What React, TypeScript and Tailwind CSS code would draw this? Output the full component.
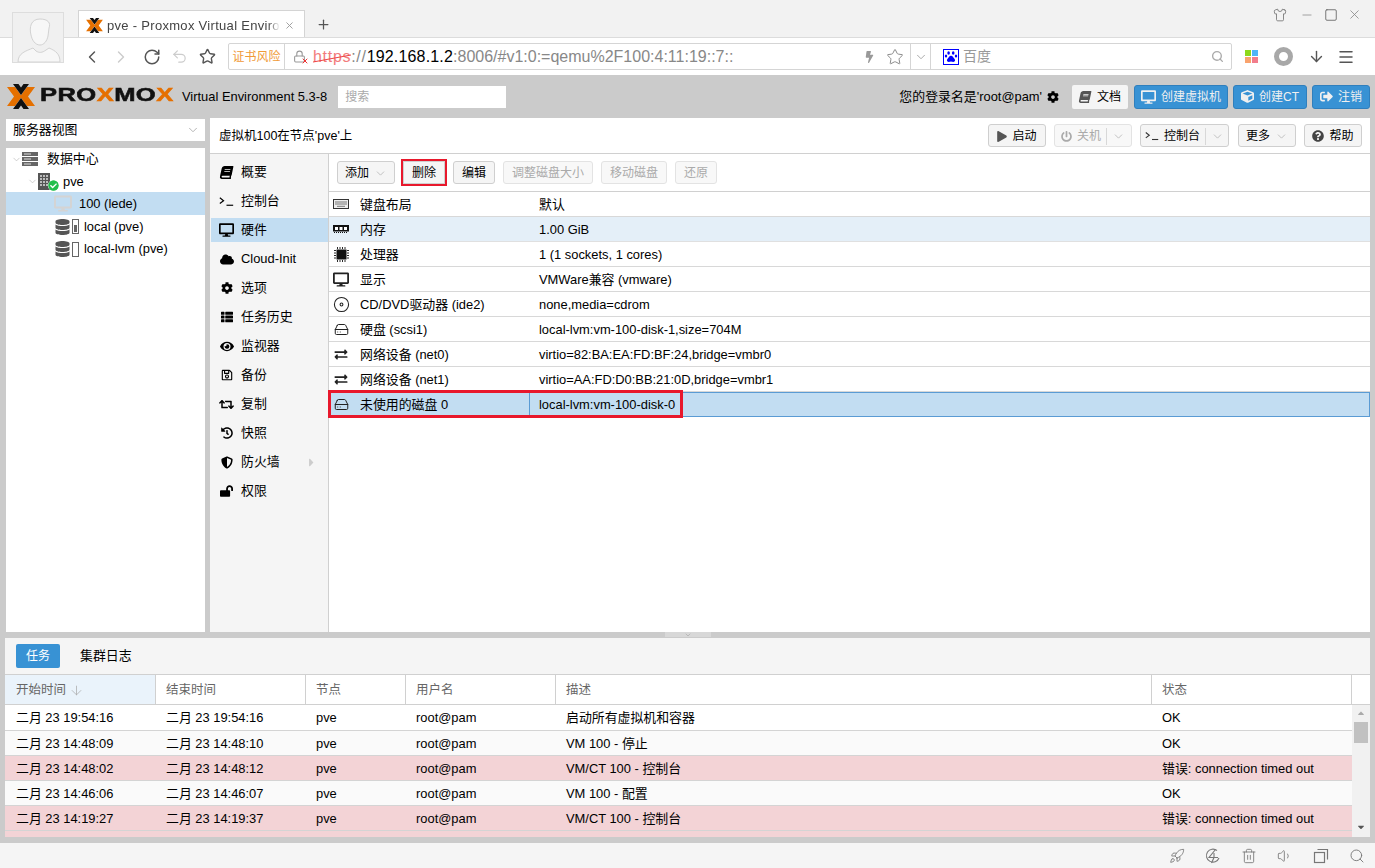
import { ReactNode } from 'react'
import {
  FaBook, FaCloud, FaCog, FaThList, FaEye, FaRegSave, FaRetweet, FaHistory, FaShieldAlt, FaLockOpen,
  FaDesktop, FaDatabase, FaCube, FaSignOutAlt, FaQuestionCircle, FaPlay, FaPowerOff,
  FaExchangeAlt, FaCheckCircle, FaCaretRight, FaCaretUp, FaCaretDown, FaBolt,
} from 'react-icons/fa'
import {
  ChevronDown, ChevronLeft, ChevronRight, RotateCw, Undo2, Star, Lock, Search, ArrowDown, Menu, Plus, X,
  Minus, Square, Shirt, HardDrive, Disc, Rocket, Trash2, Volume1, ArrowDown as SortDown,
} from 'lucide-react'

const PxLogo = ({ className }: { className?: string }) => (
  <svg viewBox="0 0 28 25" className={className}>
    <polygon points="0,3 8,3 15,12.500 8,22 0,22 7,12.500" fill="#e57000" />
    <polygon points="28,3 20,3 13,12.500 20,22 28,22 21,12.500" fill="#e57000" />
    <polygon points="6,0 11.500,0 14,3.500 16.500,0 22,0 14,11" fill="#111" />
    <polygon points="6,25 11.500,25 14,21.500 16.500,25 22,25 14,14" fill="#111" />
  </svg>
)

const Term = ({ className }: { className?: string }) => (
  <svg viewBox="0 0 18 12" className={className} fill="none" stroke="currentColor" strokeWidth="1.4">
    <path d="M1 1.500 5.500 5 1 8.500" />
    <path d="M9 10.500h8" />
  </svg>
)

const ServerIcon = () => (
  <svg viewBox="0 0 16 14" className="block h-[14px] w-[16px]">
    <rect x="0" y="0" width="16" height="4" fill="#666" />
    <rect x="0" y="5" width="16" height="4" fill="#666" />
    <rect x="0" y="10" width="16" height="4" fill="#666" />
    <path d="M2 2h7M2 7h7M2 12h7" stroke="#ddd" strokeWidth="1" />
  </svg>
)

const NodeIcon = () => (
  <span className="relative block h-[17px] w-[20px]">
    <svg viewBox="0 0 12 17" className="absolute left-0 top-0 h-[17px] w-[12px]">
      <rect width="12" height="17" fill="#555" />
      <path d="M2 3h2M5 3h2M8 3h2M2 6h2M5 6h2M8 6h2M2 9h2M5 9h2M8 9h2M2 12h2M5 12h2M8 12h2" stroke="#ddd" strokeWidth="1.400" />
    </svg>
    <FaCheckCircle className="absolute bottom-[-1px] right-[-1px] h-[11px] w-[11px] rounded-full bg-white text-[#21bf4b]" />
  </span>
)

const StorageIcon = ({ fill }: { fill: boolean }) => (
  <span className="flex items-center gap-[2px]">
    <FaDatabase className="h-[16px] w-[15px] text-[#555]" />
    <span className="flex h-[15px] w-[7px] items-end border border-[#666] bg-white p-px">
      {fill && <span className="h-[7px] w-full bg-[#666]" />}
    </span>
  </span>
)

const KeyboardIcon = () => (
  <svg viewBox="0 0 16 10" className="h-[10px] w-[16px]">
    <rect x=".5" y=".5" width="15" height="9" fill="#eee" stroke="#333" />
    <path d="M2 3h12M2 5h12M4 7.300h8" stroke="#777" strokeWidth="1" />
  </svg>
)

const MemoryIcon = () => (
  <svg viewBox="0 0 16 8" className="h-[8px] w-[16px]">
    <rect width="16" height="6.500" fill="#111" />
    <rect x="2" y="2" width="3" height="3" fill="#fff" />
    <rect x="6.500" y="2" width="3" height="3" fill="#fff" />
    <rect x="11" y="2" width="3" height="3" fill="#fff" />
    <path d="M1 7.500h14" stroke="#111" strokeDasharray="1 1" />
  </svg>
)

const ChipIcon = () => (
  <svg viewBox="0 0 15 15" className="h-[15px] w-[15px]">
    <path d="M0 3.500h15M0 6h15M0 8.500h15M0 11h15M3.500 0v15M6 0v15M8.500 0v15M11 0v15" stroke="#111" strokeWidth=".9" />
    <rect x="2" y="2" width="11" height="11" fill="#fff" />
    <rect x="2.500" y="2.500" width="10" height="10" fill="#111" />
  </svg>
)

const BaiduIcon = () => (
  <svg viewBox="0 0 16 16" className="block h-4 w-4">
    <rect x=".5" y=".5" width="15" height="15" fill="#fff" stroke="#00f" />
    <g fill="#00f">
      <ellipse cx="5.600" cy="4" rx="1.300" ry="1.700" />
      <ellipse cx="10.200" cy="4" rx="1.300" ry="1.700" />
      <ellipse cx="3" cy="7" rx="1.200" ry="1.500" />
      <ellipse cx="13" cy="7" rx="1.200" ry="1.500" />
      <path d="M8 6.800c2 0 2.200 2 3.400 3 1.200 1.100.8 3-1 3.100-1 0-1.600-.4-2.400-.4s-1.400.4-2.400.4c-1.800-.1-2.200-2-1-3.100C5.800 8.800 6 6.800 8 6.800z" />
    </g>
  </svg>
)

// status bar: circle with a bolt cutting through it
const BoltCircle = () => (
  <svg viewBox="0 0 16 16" className="h-4 w-4" fill="none" stroke="currentColor" strokeWidth="1.100">
    <path d="M12 2.500A6.500 6.500 0 1 0 14 10" />
    <path d="M10.500 1.500 4 9.500h5L6.500 15M9 5v4.500h4" />
  </svg>
)

const CopyBox = () => (
  <svg viewBox="0 0 16 16" className="h-4 w-4" fill="none" stroke="currentColor" strokeWidth="1.200">
    <rect x="1.500" y="4.500" width="10" height="10" />
    <path d="M4.500 1.500h10v10" />
  </svg>
)

const TopBtn = ({ icon, label, className }: { icon: ReactNode; label: string; className: string }) => (
  <button className={`flex h-6 items-center justify-center gap-[5px] rounded-[3px] border border-[#2f7fbd] bg-[#3892d4] text-[12px] text-[#f0f0f0] ${className}`}>
    {icon}
    <span className="pt-px">{label}</span>
  </button>
)

const Btn = ({ children, className = '', disabled }: { children: ReactNode; className?: string; disabled?: boolean }) => (
  <button className={`flex h-[23px] items-center justify-center gap-[5px] rounded-[3px] border pt-px text-[12px] ${disabled ? 'border-[#e3e3e3] bg-[#f8f8f8] text-[#aaa]' : 'border-[#cfcfcf] bg-[#f5f5f5] text-[#000]'} ${className}`}>
    {children}
  </button>
)

const Drop = () => <ChevronDown className="h-[13px] w-[13px] text-[#b5b5b5]" strokeWidth={1.5} />
const Sep = () => <span className="h-[17px] w-px bg-[#d8d8d8]" />

const navItems: { icon: ReactNode; label: string; active?: boolean; more?: boolean }[] = [
  { icon: <FaBook className="h-[13px] w-[13px] -skew-x-12" />, label: '概要' },
  { icon: <Term className="h-[11px] w-[15px]" />, label: '控制台' },
  { icon: <FaDesktop className="h-[14px] w-[15px]" />, label: '硬件', active: true },
  { icon: <FaCloud className="h-[13px] w-[14px]" />, label: 'Cloud-Init' },
  { icon: <FaCog className="h-[12px] w-[12px]" />, label: '选项' },
  { icon: <FaThList className="h-[12px] w-[14px]" />, label: '任务历史' },
  { icon: <FaEye className="h-[13px] w-[14px]" />, label: '监视器' },
  { icon: <FaRegSave className="h-[12px] w-[12px]" />, label: '备份' },
  { icon: <FaRetweet className="h-[13px] w-[15px]" />, label: '复制' },
  { icon: <FaHistory className="h-[12px] w-[12px]" />, label: '快照' },
  { icon: <FaShieldAlt className="h-[13px] w-[12px]" />, label: '防火墙', more: true },
  { icon: <FaLockOpen className="h-[12px] w-[13px]" />, label: '权限' },
]

const hwRows: { icon: ReactNode; name: string; value: string; tint?: boolean; sel?: boolean }[] = [
  { icon: <KeyboardIcon />, name: '键盘布局', value: '默认' },
  { icon: <MemoryIcon />, name: '内存', value: '1.00 GiB', tint: true },
  { icon: <ChipIcon />, name: '处理器', value: '1 (1 sockets, 1 cores)' },
  { icon: <FaDesktop className="h-[15px] w-[16px]" />, name: '显示', value: 'VMWare兼容 (vmware)' },
  { icon: <Disc className="h-[17px] w-[17px]" strokeWidth={1.5} />, name: 'CD/DVD驱动器 (ide2)', value: 'none,media=cdrom' },
  { icon: <HardDrive className="h-[15px] w-[15px]" strokeWidth={1.6} />, name: '硬盘 (scsi1)', value: 'local-lvm:vm-100-disk-1,size=704M' },
  { icon: <FaExchangeAlt className="h-[13px] w-[16px]" />, name: '网络设备 (net0)', value: 'virtio=82:BA:EA:FD:BF:24,bridge=vmbr0' },
  { icon: <FaExchangeAlt className="h-[13px] w-[16px]" />, name: '网络设备 (net1)', value: 'virtio=AA:FD:D0:BB:21:0D,bridge=vmbr1' },
  { icon: <HardDrive className="h-[15px] w-[15px]" strokeWidth={1.6} />, name: '未使用的磁盘 0', value: 'local-lvm:vm-100-disk-0', sel: true },
]

const tasks = [
  ['二月 23 19:54:16', '二月 23 19:54:16', '启动所有虚拟机和容器', 'OK', false],
  ['二月 23 14:48:09', '二月 23 14:48:10', 'VM 100 - 停止', 'OK', false],
  ['二月 23 14:48:02', '二月 23 14:48:12', 'VM/CT 100 - 控制台', '错误: connection timed out', true],
  ['二月 23 14:46:06', '二月 23 14:46:07', 'VM 100 - 配置', 'OK', false],
  ['二月 23 14:19:27', '二月 23 14:19:37', 'VM/CT 100 - 控制台', '错误: connection timed out', true],
] as const

const taskCols = 'grid grid-cols-[151px_150px_100px_150px_596px_200px]'

export default function App() {
  return (
    <div className="flex h-screen w-full flex-col overflow-hidden bg-[#cbcbcb] font-['Liberation_Sans','Noto_Sans_CJK_SC',sans-serif] text-[12.9px] text-black">
      {/* browser tab strip */}
      <div className="relative flex h-[38px] shrink-0 items-end border-b border-[#dcdcdc] bg-[#f2f2f2] pl-[78px]">
        <div className="flex h-[27px] w-[227px] items-center gap-[4px] border border-b-0 border-[#d4d4d4] bg-white pl-[7px] pr-[9px] pt-[3px] text-[13px] text-[#444]">
          <PxLogo className="h-[15px] w-[17px] shrink-0" />
          <span className="min-w-0 flex-1 whitespace-nowrap tracking-[0.3px] [mask-image:linear-gradient(to_left,transparent,black_12px)]">pve - Proxmox Virtual Enviror</span>
          <X className="h-[11px] w-[11px] shrink-0 text-[#999]" />
        </div>
        <Plus className="mb-[5px] ml-[11px] h-[15px] w-[15px] text-[#555]" strokeWidth={2} />
        <div className="ml-auto mb-[15px] flex items-center pr-[13px] text-[#666]">
          <Shirt className="h-[14px] w-[14px]" strokeWidth={1.3} />
          <Minus className="ml-[13px] h-[14px] w-[14px] text-[#888]" strokeWidth={1.3} />
          <Square className="ml-[10px] h-[14px] w-[14px]" strokeWidth={1.5} />
          <X className="ml-[9px] h-[15px] w-[15px] text-[#888]" strokeWidth={1.3} />
        </div>
        {/* avatar overlaps tab strip and toolbar */}
        <div className="absolute left-[12px] top-[12px] z-10 h-[51px] w-[52px] border border-[#ddd] bg-[#f0f0f0]">
          <svg viewBox="0 0 50 49" className="h-full w-full" fill="#f7f7f7" stroke="#d2d2d2">
            <path d="M18 22c-2-8 0-16 9-16 8 0 11 4 9 9l-1 8c-1 5-4 9-8 9-5 0-8-5-9-10z" />
            <path d="M5 49c0-9 8-11 15-14l3 3c3 2 6 2 10-1l3-2c7 3 11 6 11 14z" />
          </svg>
        </div>
      </div>

      {/* browser toolbar */}
      <div className="flex h-[37px] shrink-0 items-center bg-white pl-[82px]">
        <ChevronLeft className="h-[20px] w-[20px] text-[#555]" strokeWidth={1.7} />
        <ChevronRight className="ml-[9px] h-[20px] w-[20px] text-[#ccc]" strokeWidth={1.7} />
        <RotateCw className="ml-[12px] h-[18px] w-[18px] text-[#555]" strokeWidth={2} />
        <Undo2 className="ml-[10px] h-[17px] w-[17px] text-[#ccc]" strokeWidth={1.7} />
        <Star className="ml-[11px] h-[17px] w-[17px] text-[#555]" strokeWidth={2} />
        <div className="ml-[12px] flex h-[27px] w-[1004px] items-center rounded-[2px] border border-[#d5d5d5]">
          <span className="flex h-full w-[56px] shrink-0 items-center justify-center border-r border-[#d5d5d5] text-[12px] text-[#f09a37]">证书风险</span>
          <span className="relative ml-[8px] mr-[7px] shrink-0">
            <Lock className="h-[13px] w-[13px] text-[#999]" strokeWidth={2} />
            <X className="absolute bottom-[-2px] right-[-3px] h-[8px] w-[8px] text-[#e33]" strokeWidth={3} />
          </span>
          <span className="min-w-0 flex-1 whitespace-nowrap text-[16px] text-[#888]">
            <span className="tracking-[0.7px]">
              <span className="relative text-[#f27c7c]">
                https
                <svg viewBox="0 0 38 10" className="absolute left-0 top-[6px] h-[10px] w-[38px]">
                  <path d="M0 8 38 1" stroke="#e44" strokeWidth="1.200" />
                </svg>
              </span>
              ://
            </span>
            <span className="tracking-[0.17px] text-black">192.168.1.2</span>:8006/#v1:0:=qemu%2F100:4:11:19::7::
          </span>
          <FaBolt className="h-[12px] w-[9px] shrink-0 text-[#999]" />
          <Star className="ml-[12px] h-[18px] w-[18px] shrink-0 text-[#888]" strokeWidth={1.3} />
          <span className="ml-[6px] flex h-full w-[21px] shrink-0 items-center justify-center border-x border-[#d5d5d5]">
            <ChevronDown className="h-[14px] w-[14px] text-[#aaa]" strokeWidth={1.7} />
          </span>
          <span className="ml-[12px] shrink-0"><BaiduIcon /></span>
          <span className="ml-[4px] flex-none text-[14px] text-[#999]">百度</span>
          <span className="w-[220px] shrink-0" />
          <Search className="mr-[7px] h-[13px] w-[13px] shrink-0 text-[#aaa]" strokeWidth={2.5} />
        </div>
        <span className="ml-[13px] grid h-[13px] w-[13px] grid-cols-2 gap-px">
          <i className="bg-[#8ed81a]" />
          <i className="bg-[#4fb5f7]" />
          <i className="bg-[#f9a36d]" />
          <i className="bg-[#f27d8c]" />
        </span>
        <span className="ml-[16px] h-[19px] w-[19px] rounded-full border-[5px] border-[#a8a8a8]" />
        <ArrowDown className="ml-[15px] h-[17px] w-[17px] text-[#555]" strokeWidth={2} />
        <Menu className="ml-[12px] h-[18px] w-[18px] text-[#555]" strokeWidth={2} />
      </div>

      {/* proxmox header */}
      <div className="flex h-[43px] shrink-0 items-center pl-[7px] pr-[5px]">
        <PxLogo className="h-[25px] w-[28px]" />
        <span className="ml-[5px] w-[134px] shrink-0 whitespace-nowrap">
          <span className="inline-block origin-left scale-x-[1.42] text-[18px] font-bold leading-none tracking-[0.3px] text-[#111] [-webkit-text-stroke:0.5px]">
            PRO<span className="text-[#e57000]">X</span>MO<span className="text-[#e57000]">X</span>
          </span>
        </span>
        <span className="ml-[8px] whitespace-nowrap pt-px">Virtual Environment 5.3-8</span>
        <div className="ml-[11px] flex h-[22px] w-[168px] items-center bg-white px-[7px] pt-px text-[12px] text-[#aaa]">搜索</div>
        <span className="ml-auto whitespace-nowrap pt-px">您的登录名是'root@pam'</span>
        <FaCog className="ml-[5px] h-[12px] w-[12px]" />
        <button className="ml-[13px] flex h-6 w-[56px] items-center justify-center gap-[6px] rounded-[2px] bg-[#f5f5f5] pt-px text-[12px]">
          <FaBook className="h-[12px] w-[12px] -skew-x-12 text-[#555]" />
          文档
        </button>
        <TopBtn className="ml-[6px] w-[94px]" icon={<FaDesktop className="h-[14px] w-[15px]" />} label="创建虚拟机" />
        <TopBtn className="ml-[5px] w-[74px]" icon={<FaCube className="h-[13px] w-[13px]" />} label="创建CT" />
        <TopBtn className="ml-[5px] w-[58px]" icon={<FaSignOutAlt className="h-[13px] w-[13px]" />} label="注销" />
      </div>

      {/* workspace */}
      <div className="flex h-[514px] shrink-0 gap-[5px] pl-[6px] pr-[5px]">
        <div className="flex w-[199px] flex-col gap-[7px] pt-px">
          <div className="flex h-[22px] items-center justify-between bg-white pl-[7px] pr-[5px]">
            服务器视图
            <ChevronDown className="h-[14px] w-[14px] text-[#aaa]" strokeWidth={1.5} />
          </div>
          <div className="flex-1 bg-white">
            <div className="flex h-[22px] items-center pl-[5px]">
              <ChevronDown className="h-[11px] w-[11px] text-[#bbb]" strokeWidth={1.5} />
              <span><ServerIcon /></span>
              <span className="ml-[9px]">数据中心</span>
            </div>
            <div className="flex h-[22px] items-center pl-[21px]">
              <ChevronDown className="h-[11px] w-[11px] text-[#bbb]" strokeWidth={1.5} />
              <span><NodeIcon /></span>
              <span className="ml-[5px] pt-px">pve</span>
            </div>
            <div className="flex h-[23px] items-center bg-[#c2ddf2] pl-[48px]">
              <FaDesktop className="h-[17px] w-[18px] text-[#d4d4d4]" />
              <span className="ml-[7px]">100 (lede)</span>
            </div>
            <div className="flex h-[23px] items-center pl-[49px]">
              <StorageIcon fill />
              <span className="ml-[5px]">local (pve)</span>
            </div>
            <div className="flex h-[22px] items-center pl-[49px]">
              <StorageIcon fill={false} />
              <span className="ml-[5px]">local-lvm (pve)</span>
            </div>
          </div>
        </div>

        <div className="flex flex-1 flex-col bg-white">
          <div className="flex h-[36px] shrink-0 items-center border-b border-[#d0d0d0] pl-[9px] pr-[8px]">
            <span className="pt-[2px] text-[12.5px]">虚拟机100在节点'pve'上</span>
            <div className="ml-auto flex items-center gap-[8px]">
              <Btn className="w-[58px]"><FaPlay className="h-[11px] w-[10px] text-[#555]" />启动</Btn>
              <Btn disabled className="w-[78px]"><FaPowerOff className="h-[11px] w-[11px]" />关机<Sep /><Drop /></Btn>
              <Btn className="w-[89px]"><Term className="h-[10px] w-[14px] text-[#333]" />控制台<Sep /><Drop /></Btn>
              <Btn className="ml-[1px] w-[58px]">更多<Drop /></Btn>
              <Btn className="w-[58px]"><FaQuestionCircle className="h-[12px] w-[12px] text-[#444]" />帮助</Btn>
            </div>
          </div>

          <div className="flex min-h-0 flex-1">
            <div className="flex w-[119px] shrink-0 flex-col gap-[5px] border-r border-[#d0d0d0] bg-[#f5f5f5] pl-px pt-[6px]">
              {navItems.map((item) => (
                <div key={item.label} className={`flex h-6 shrink-0 items-center ${item.active ? 'bg-[#c2ddf2]' : ''}`}>
                  <span className="flex w-[30px] shrink-0 justify-center pl-[1px]">{item.icon}</span>
                  <span>{item.label}</span>
                  {item.more && <FaCaretRight className="ml-[25px] h-[13px] w-[13px] text-[#ccc]" />}
                </div>
              ))}
            </div>

            <div className="flex min-w-0 flex-1 flex-col">
              <div className="flex h-[38px] shrink-0 items-center gap-[8px] border-b border-[#d0d0d0] pl-[8px]">
                <Btn className="w-[58px]">添加<Drop /></Btn>
                <Btn className="w-[42px] rounded-none! outline-2 outline-[#e8182c]">删除</Btn>
                <Btn className="w-[42px]">编辑</Btn>
                <Btn disabled className="w-[90px]">调整磁盘大小</Btn>
                <Btn disabled className="w-[66px]">移动磁盘</Btn>
                <Btn disabled className="w-[42px]">还原</Btn>
              </div>
              {hwRows.map((row) => (
                <div
                  key={row.name}
                  className={`relative grid h-[25px] shrink-0 grid-cols-[200px_1fr] border-b ${row.sel ? 'border-[#5a9bd4] bg-[#c2ddf2]' : row.tint ? 'border-[#e0e0e0] bg-[#e4eff8]' : 'border-[#d8d8d8]'}`}
                >
                  <div className="flex items-center pl-[2px]">
                    <span className="flex w-[20px] justify-center text-[#222]">{row.icon}</span>
                    <span className="ml-[9px] whitespace-nowrap pt-px">{row.name}</span>
                  </div>
                  <div className={`flex items-center pt-px ${row.sel ? 'border-x border-t border-[#5a9bd4] pl-[9px]' : 'pl-[10px]'}`}>
                    {row.value}
                  </div>
                  {row.sel && <div className="absolute -left-px -top-[2px] bottom-[-2px] w-[355px] border-[3px] border-[#e8182c]" />}
                </div>
              ))}
            </div>
          </div>
        </div>
      </div>

      {/* splitter */}
      <div className="flex h-[6px] shrink-0 justify-center">
        <div className="flex h-[5px] w-[46px] items-center justify-center bg-[#d8d8d8]">
          <ChevronDown className="h-[8px] w-[8px] text-[#aaa]" />
        </div>
      </div>

      {/* task log panel */}
      <div className="mx-[5px] flex h-[199px] shrink-0 flex-col overflow-hidden bg-[#f5f5f5]">
        <div className="flex h-[37px] shrink-0 items-center border-b border-[#d0d0d0] pl-[11px]">
          <span className="flex h-[24px] w-[44px] items-center justify-center rounded-[2px] bg-[#3892d4] text-[12px] text-white">任务</span>
          <span className="ml-[20px]">集群日志</span>
        </div>
        <div className="flex h-[30px] shrink-0 border-b border-[#d0d0d0] bg-white text-[12.5px] text-[#666]">
          <div className={`${taskCols} flex-1`}>
            <div className="flex items-center gap-[3px] border-r border-[#d0d0d0] bg-[#eaf3fb] pl-[11px] pt-px">
              开始时间<SortDown className="h-[15px] w-[15px] text-[#aaa]" strokeWidth={1.2} />
            </div>
            {['结束时间', '节点', '用户名', '描述', '状态'].map((h) => (
              <div key={h} className="flex items-center border-r border-[#d0d0d0] pl-[10px] pt-px">{h}</div>
            ))}
          </div>
          <div className="w-[18px]" />
        </div>
        <div className="flex min-h-0 flex-1 bg-white">
          <div className="min-w-0 flex-1">
            {tasks.map(([start, end, desc, status, err], i) => (
              <div
                key={start}
                className={`${taskCols} items-center border-b border-[#d4d4d4] pt-px ${i === 0 ? 'h-[26px]' : 'h-[25px]'} ${err ? 'bg-[#f3d3d6]' : i % 2 ? 'bg-[#fafafa]' : 'bg-white'}`}
              >
                <span className="pl-[11px]">{start}</span>
                <span className="pl-[10px]">{end}</span>
                <span className="pl-[10px]">pve</span>
                <span className="pl-[10px]">root@pam</span>
                <span className="pl-[10px]">{desc}</span>
                <span className="pl-[10px]">{status}</span>
              </div>
            ))}
            <div className="h-[6px] bg-[#f3d3d6]" />
          </div>
          <div className="flex w-[18px] shrink-0 flex-col items-center bg-[#f1f1f1] pt-[3px]">
            <FaCaretUp className="h-[10px] w-[10px] text-[#aaa]" />
            <div className="mt-[4px] h-[21px] w-[14px] bg-[#c1c1c1]" />
            <FaCaretDown className="mb-[5px] mt-auto h-[10px] w-[10px] text-[#555]" />
          </div>
        </div>
      </div>

      <div className="h-[6px] shrink-0" />

      {/* browser status bar */}
      <div className="flex flex-1 items-center justify-end gap-[20px] bg-[#f5f5f5] pr-[10px] text-[#777]">
        <Rocket className="h-4 w-4" strokeWidth={1.3} />
        <BoltCircle />
        <Trash2 className="h-4 w-4" strokeWidth={1.3} />
        <Volume1 className="h-4 w-4" strokeWidth={1.3} />
        <CopyBox />
        <Search className="h-4 w-4" strokeWidth={1.4} />
      </div>
    </div>
  )
}
